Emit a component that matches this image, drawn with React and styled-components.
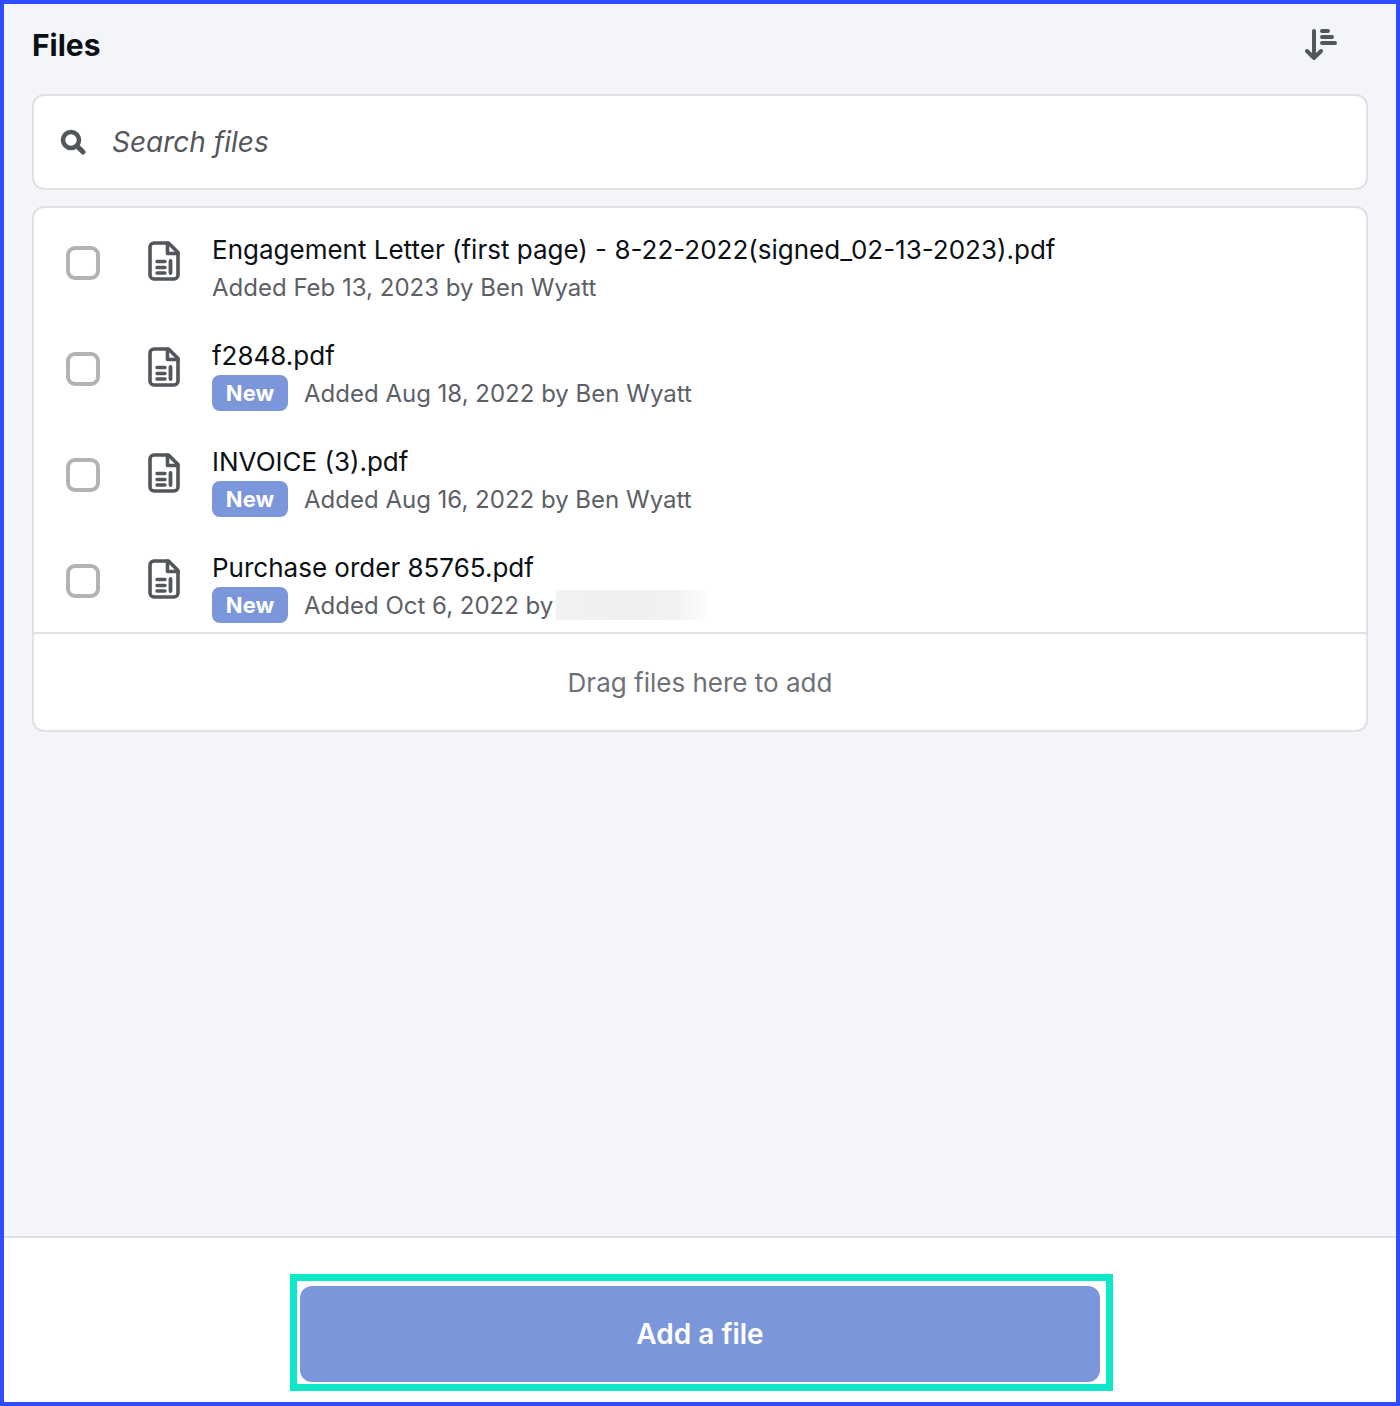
import styled, { createGlobalStyle } from 'styled-components';

const GlobalStyle = createGlobalStyle`
  * { box-sizing: border-box; }
  html, body { margin: 0; padding: 0; }
  body { font-family: Inter, "Noto Sans", sans-serif; background: #fff; }
`;

const Frame = styled.div`
  display: flex;
  flex-direction: column;
  width: 1400px;
  height: 1406px;
  border: 4px solid #2f4dff;
  background: #f3f5f9;
`;

const Main = styled.main`
  flex: 1;
  display: flex;
  flex-direction: column;
  padding: 0 28px;
`;

const Header = styled.header`
  display: flex;
  align-items: center;
  justify-content: space-between;
  height: 90px;
  padding: 0 28px 8px 0;
`;

const Title = styled.h1`
  margin: 0;
  font-size: 30px;
  font-weight: 700;
  line-height: 36px;
  color: #0b1015;
`;

const SortButton = styled.button`
  display: flex;
  padding: 0;
  border: 0;
  background: none;
  margin-right: 3px;
`;

const SearchBox = styled.label`
  display: flex;
  align-items: center;
  gap: 26px;
  height: 96px;
  padding: 0 26px;
  background: #fff;
  border: 2px solid #e0e1e4;
  border-radius: 12px;
`;

const SearchInput = styled.input`
  flex: 1;
  border: 0;
  outline: 0;
  padding: 0;
  font-family: inherit;
  font-size: 28px;
  font-style: italic;
  color: #53565c;
  &::placeholder {
    color: #53565c;
    opacity: 1;
  }
`;

const Card = styled.section`
  margin-top: 16px;
  background: #fff;
  border: 2px solid #e0e1e4;
  border-radius: 12px;
`;

const Row = styled.div`
  display: flex;
  align-items: flex-start;
  height: 106px;
  padding: 24px 0 0 32px;
`;

const Check = styled.span`
  flex: none;
  width: 34px;
  height: 34px;
  margin-top: 14px;
  border: 4px solid #b3b3b3;
  border-radius: 9px;
`;

const IconSlot = styled.span`
  flex: none;
  display: flex;
  width: 32px;
  height: 40px;
  margin: 9px 32px 0 48px;
`;

const RowText = styled.div`
  min-width: 0;
`;

const FileName = styled.div`
  font-size: 26px;
  line-height: 36px;
  color: #0b1015;
`;

const MetaLine = styled.div`
  display: flex;
  align-items: center;
  gap: 16px;
  height: 36px;
  margin-top: 1px;
  font-size: 24px;
  color: #5c6066;
`;

const Badge = styled.span`
  display: flex;
  align-items: center;
  justify-content: center;
  width: 76px;
  height: 36px;
  margin-top: -1px;
  border-radius: 8px;
  background: #7b96db;
  color: #fff;
  font-size: 22px;
  font-weight: 700;
`;

const Added = styled.span`
  display: flex;
  align-items: center;
`;

const Redacted = styled.span`
  display: block;
  width: 156px;
  height: 30px;
  margin-left: 3px;
  background: linear-gradient(90deg, #f2f2f2 0%, #efefef 55%, #f3f3f3 78%, #fff 100%);
`;

const DropZone = styled.div`
  display: flex;
  align-items: center;
  justify-content: center;
  height: 98px;
  border-top: 2px solid #e0e1e4;
  font-size: 26px;
  color: #6d7278;
`;

const Footer = styled.footer`
  display: flex;
  justify-content: center;
  height: 166px;
  padding-top: 48px;
  background: #fff;
  border-top: 2px solid #dfdfe4;
`;

const AddButton = styled.button`
  position: relative;
  width: 800px;
  height: 96px;
  padding: 0;
  border: 0;
  border-radius: 12px;
  background: #7b96db;
  color: #fff;
  font-family: inherit;
  font-size: 28px;
  font-weight: 600;

  &::after {
    content: '';
    position: absolute;
    top: -12px;
    right: -12.5px;
    bottom: -9px;
    left: -10.5px;
    border: 7px solid #0de8c8;
  }
`;

const files = [
  { name: 'Engagement Letter (first page) - 8-22-2022(signed_02-13-2023).pdf', added: 'Added Feb 13, 2023 by Ben Wyatt' },
  { name: 'f2848.pdf', added: 'Added Aug 18, 2022 by Ben Wyatt', isNew: true },
  { name: 'INVOICE (3).pdf', added: 'Added Aug 16, 2022 by Ben Wyatt', isNew: true },
  { name: 'Purchase order 85765.pdf', added: 'Added Oct 6, 2022 by', isNew: true, redacted: true },
];

const SortIcon = () => (
  <svg width="32" height="34" viewBox="0 0 32 34" fill="none" stroke="#53565c" strokeWidth="4" strokeLinecap="round" strokeLinejoin="round">
    <path d="M9 3v27M2 23l7 7 7-7" />
    <path d="M17 3h6M17 9h10M17 15h13" />
  </svg>
);

const SearchIcon = () => (
  <svg width="26" height="26" viewBox="0 0 26 26" fill="none" stroke="#53565c" strokeLinecap="round">
    <circle cx="11" cy="11" r="8" strokeWidth="4.5" />
    <path d="M17 17l6 6" strokeWidth="5" />
  </svg>
);

const FileIcon = () => (
  <svg width="32" height="40" viewBox="0 0 32 40" fill="none" stroke="#53565c" strokeWidth="3.6" strokeLinecap="round" strokeLinejoin="round">
    <path d="M6 2h14.5L30 11.5V34a4 4 0 0 1-4 4H6a4 4 0 0 1-4-4V6a4 4 0 0 1 4-4z" />
    <path d="M19.5 2v10.5H30" />
    <path d="M9 20.5h8M9 26.5h8M9 32h8" strokeWidth="3.4" />
    <path d="M22.5 20v12" strokeWidth="3.8" />
  </svg>
);

const App = () => (
  <>
    <GlobalStyle />
    <Frame>
      <Main>
        <Header>
          <Title>Files</Title>
          <SortButton aria-label="Sort"><SortIcon /></SortButton>
        </Header>
        <SearchBox>
          <SearchIcon />
          <SearchInput placeholder="Search files" />
        </SearchBox>
        <Card>
          {files.map(file => (
            <Row key={file.name}>
              <Check />
              <IconSlot><FileIcon /></IconSlot>
              <RowText>
                <FileName>{file.name}</FileName>
                <MetaLine>
                  {file.isNew && <Badge>New</Badge>}
                  <Added>
                    {file.added}
                    {file.redacted && <Redacted />}
                  </Added>
                </MetaLine>
              </RowText>
            </Row>
          ))}
          <DropZone>Drag files here to add</DropZone>
        </Card>
      </Main>
      <Footer>
        <AddButton>Add a file</AddButton>
      </Footer>
    </Frame>
  </>
);

export default App;
